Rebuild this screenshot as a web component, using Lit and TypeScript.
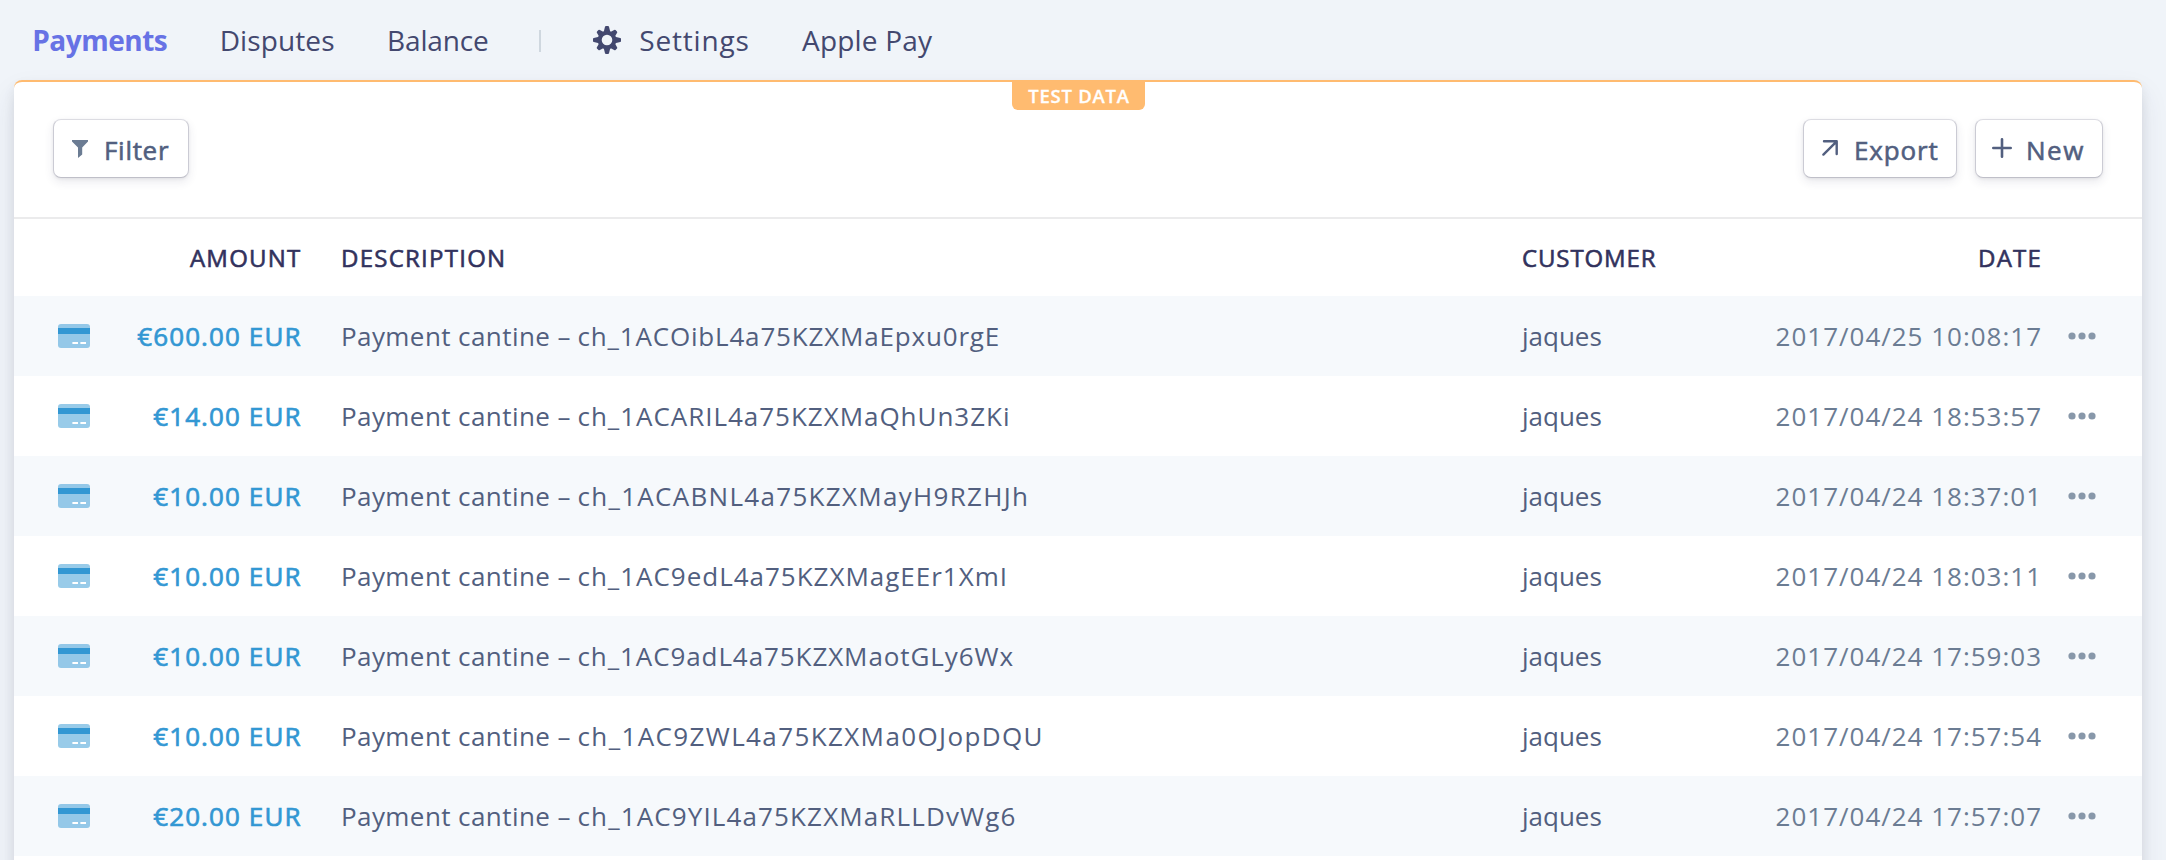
import { LitElement, html, svg, css } from "lit";
import { customElement, property } from "lit/decorators.js";
import { styleMap } from "lit/directives/style-map.js";
import { classMap } from "lit/directives/class-map.js";

interface Tab {
  label: string;
  tracking: number;
  active?: boolean;
  icon?: boolean;
}

interface Payment {
  amount: string;
  id: string;
  tracking: number;
  customer: string;
  date: string;
}

const primaryTabs: Tab[] = [
  { label: "Payments", tracking: -0.48, active: true },
  { label: "Disputes", tracking: 0.11 },
  { label: "Balance", tracking: -0.14 },
];

const secondaryTabs: Tab[] = [
  { label: "Settings", tracking: 0.82, icon: true },
  { label: "Apple Pay", tracking: 0.2 },
];

const payments: Payment[] = [
  { amount: "€600.00 EUR", id: "ch_1ACOibL4a75KZXMaEpxu0rgE", tracking: 0.82, customer: "jaques", date: "2017/04/25 10:08:17" },
  { amount: "€14.00 EUR", id: "ch_1ACARIL4a75KZXMaQhUn3ZKi", tracking: 0.97, customer: "jaques", date: "2017/04/24 18:53:57" },
  { amount: "€10.00 EUR", id: "ch_1ACABNL4a75KZXMayH9RZHJh", tracking: 1.3, customer: "jaques", date: "2017/04/24 18:37:01" },
  { amount: "€10.00 EUR", id: "ch_1AC9edL4a75KZXMagEEr1XmI", tracking: 0.98, customer: "jaques", date: "2017/04/24 18:03:11" },
  { amount: "€10.00 EUR", id: "ch_1AC9adL4a75KZXMaotGLy6Wx", tracking: 0.91, customer: "jaques", date: "2017/04/24 17:59:03" },
  { amount: "€10.00 EUR", id: "ch_1AC9ZWL4a75KZXMa0OJopDQU", tracking: 1.38, customer: "jaques", date: "2017/04/24 17:57:54" },
  { amount: "€20.00 EUR", id: "ch_1AC9YIL4a75KZXMaRLLDvWg6", tracking: 1.13, customer: "jaques", date: "2017/04/24 17:57:07" },
];

const tracked = (value: number) => styleMap({ letterSpacing: `${value}px` });

@customElement("nav-tabs")
class NavTabs extends LitElement {
  static styles = css`
    :host {
      display: block;
    }
    .bar {
      display: flex;
      align-items: center;
      gap: 52.4px;
      height: 80px;
      padding-left: 32.2px;
      font-size: 28px;
      line-height: 80px;
      color: #43486f;
      white-space: nowrap;
    }
    .tab {
      display: flex;
      align-items: center;
    }
    .active {
      font-weight: 700;
      color: #6772e5;
    }
    .rule {
      width: 2px;
      height: 22px;
      margin: 2px 0 0 -2px;
      background: #cfd7df;
    }
    .gear {
      width: 28px;
      height: 28px;
      margin-right: 17.8px;
    }
  `;

  private gear() {
    return html`<svg class="gear" viewBox="-14 -14 28 28">
      <circle r="7.3" fill="none" stroke="#43486f" stroke-width="4" />
      ${[0, 45, 90, 135, 180, 225, 270, 315].map(
        (angle) => svg`<path fill="#43486f" transform=${`rotate(${angle})`}
          d=${angle % 90 ? "M-3.2-8-2.1-12.2Q-1.8-13.1-1-13.1H1Q1.8-13.1 2.1-12.2L3.2-8Z" : "M-3.3-8-2-13.2Q-1.8-14-1-14H1Q1.8-14 2-13.2L3.3-8Z"} />`,
      )}
    </svg>`;
  }

  private tab(t: Tab) {
    return html`<div class=${classMap({ tab: true, active: !!t.active })}>
      ${t.icon ? this.gear() : ""}<span style=${tracked(t.tracking)}>${t.label}</span>
    </div>`;
  }

  render() {
    return html`<nav class="bar">
      ${primaryTabs.map((t) => this.tab(t))}
      <div class="rule"></div>
      ${secondaryTabs.map((t) => this.tab(t))}
    </nav>`;
  }
}

@customElement("tool-button")
class ToolButton extends LitElement {
  @property() label = "";
  @property() kind = "filter";

  static styles = css`
    :host {
      display: block;
    }
    .button {
      box-sizing: border-box;
      display: flex;
      align-items: center;
      height: 59px;
      border: 1px solid #cbcbd4;
      border-top-color: #dcdce2;
      border-bottom-color: #bfbfc8;
      border-radius: 8px;
      background: #fff;
      box-shadow: 0 4px 10px rgba(50, 50, 93, 0.1), 0 1px 3px rgba(0, 0, 0, 0.06);
      font-size: 26px;
      color: #525f7f;
      white-space: nowrap;
    }
    .text {
      line-height: 57px;
      padding-top: 3px;
      -webkit-text-stroke: 0.6px #525f7f;
    }
    .filter {
      width: 136px;
      padding-left: 18px;
      letter-spacing: 0.7px;
    }
    .filter .icon {
      width: 16px;
      height: 18px;
      margin: 1px 16px 0 0;
    }
    .export {
      width: 154px;
      padding-left: 18px;
      letter-spacing: 0.85px;
    }
    .export .icon {
      width: 16px;
      height: 16px;
      margin: 0 16px 1px 0;
    }
    .new {
      width: 128px;
      padding-left: 16px;
      letter-spacing: 1.5px;
    }
    .new .icon {
      width: 20px;
      height: 20px;
      margin: 0 14px 1px 0;
    }
  `;

  private icon() {
    if (this.kind === "filter") {
      return html`<svg class="icon" viewBox="0 0 16 18">
        <path fill="#6b7c93" d="M0 0H16V1.6L10.2 7.4V14.6L6 18V7.4L0 1.6Z" />
      </svg>`;
    }
    if (this.kind === "export") {
      return html`<svg class="icon" viewBox="0 0 16 16">
        <path fill="none" stroke="#525f7f" stroke-width="2.4" stroke-linecap="round" stroke-linejoin="round" d="M2 1.3H14.7V14M14.2 1.8 1.4 14.6" />
      </svg>`;
    }
    return html`<svg class="icon" viewBox="0 0 20 20">
      <path fill="none" stroke="#525f7f" stroke-width="2.6" stroke-linecap="round" d="M10 1.3V18.7M1.3 10H18.7" />
    </svg>`;
  }

  render() {
    return html`<div class="button ${this.kind}">${this.icon()}<span class="text">${this.label}</span></div>`;
  }
}

@customElement("payments-table")
class PaymentsTable extends LitElement {
  static styles = css`
    :host {
      display: block;
    }
    .row {
      display: grid;
      grid-template-columns: 32px 211px 40px minmax(0, 1fr) 219px 300px 27px 28px;
      align-items: center;
      height: 80px;
      padding: 0 46px 0 44px;
      font-size: 26px;
      line-height: 80px;
      color: #525f7f;
      white-space: nowrap;
    }
    .row:nth-child(even) {
      background: #f6f9fc;
    }
    .head {
      height: 77px;
      line-height: 76px;
      font-size: 24px;
      letter-spacing: 1.25px;
      color: #32325d;
      -webkit-text-stroke: 0.6px #32325d;
    }
    .head .customer {
      letter-spacing: 0.88px;
    }
    .card {
      width: 32px;
      height: 24px;
    }
    .amount {
      grid-column: 2;
      text-align: right;
      margin-right: -0.6px;
    }
    .money {
      letter-spacing: 1.1px;
      color: #3297d3;
      -webkit-text-stroke: 0.7px #3297d3;
    }
    .description {
      grid-column: 4;
      display: flex;
    }
    .label {
      width: 236.5px;
      letter-spacing: 0.42px;
    }
    .customer {
      grid-column: 5;
    }
    .date {
      grid-column: 6;
      text-align: right;
      margin-right: -1px;
    }
    .head .date {
      margin-right: -1.2px;
    }
    .time {
      letter-spacing: 0.99px;
      color: #6b7c93;
    }
    .more {
      grid-column: 8;
      width: 28px;
      height: 8px;
    }
  `;

  private row(p: Payment) {
    return html`<div class="row">
      <svg class="card" viewBox="0 0 32 24">
        <rect width="32" height="24" rx="3" fill="#3297d3" fill-opacity="0.5" />
        <rect y="4" width="32" height="6" fill="#3297d3" />
        <path stroke="#fff" stroke-width="2" d="M14.4 19H20M22.4 19H28" />
      </svg>
      <span class="amount money">${p.amount}</span>
      <span class="description"><span class="label">Payment cantine –</span><span style=${tracked(p.tracking)}>${p.id}</span></span>
      <span class="customer">${p.customer}</span>
      <span class="date time">${p.date}</span>
      <svg class="more" viewBox="0 0 28 8" fill="#8898aa">
        <circle cx="4" cy="4" r="3.6" />
        <circle cx="14" cy="4" r="3.6" />
        <circle cx="24" cy="4" r="3.6" />
      </svg>
    </div>`;
  }

  render() {
    return html`<div class="row head">
        <span class="amount">AMOUNT</span>
        <span class="description">DESCRIPTION</span>
        <span class="customer">CUSTOMER</span>
        <span class="date">DATE</span>
      </div>
      ${payments.map((p) => this.row(p))}`;
  }
}

@customElement("app-root")
class AppRoot extends LitElement {
  static styles = css`
    :host {
      display: block;
      height: 860px;
      overflow: hidden;
      background: #f0f4f9;
      font-family: "Open Sans", "Noto Sans", sans-serif;
    }
    .panel {
      position: relative;
      box-sizing: border-box;
      height: 860px;
      margin: 0 24px 0 14px;
      border-top: 2px solid #ffbb70;
      border-radius: 8px;
      background: #fff;
      box-shadow: 0 14px 28px rgba(50, 50, 93, 0.1), 0 6px 12px rgba(0, 0, 0, 0.08);
    }
    .badge {
      position: absolute;
      top: -2px;
      left: 50%;
      box-sizing: border-box;
      width: 133px;
      height: 30px;
      margin-left: -66px;
      padding-top: 2px;
      border-radius: 0 0 6px 6px;
      background: #ffbb70;
      color: #fff;
      font-size: 18.5px;
      font-weight: 600;
      line-height: 28px;
      letter-spacing: 0.75px;
      text-indent: 1px;
      text-align: center;
      -webkit-text-stroke: 0.3px #fff;
    }
    .toolbar {
      display: flex;
      gap: 18px;
      height: 98px;
      padding: 37px 39px 0;
      border-bottom: 2px solid #ebebec;
    }
    .spacer {
      flex: 1;
    }
  `;

  render() {
    return html`<nav-tabs></nav-tabs>
      <main class="panel">
        <div class="badge">TEST DATA</div>
        <div class="toolbar">
          <tool-button kind="filter" label="Filter"></tool-button>
          <div class="spacer"></div>
          <tool-button kind="export" label="Export"></tool-button>
          <tool-button kind="new" label="New"></tool-button>
        </div>
        <payments-table></payments-table>
      </main>`;
  }
}
